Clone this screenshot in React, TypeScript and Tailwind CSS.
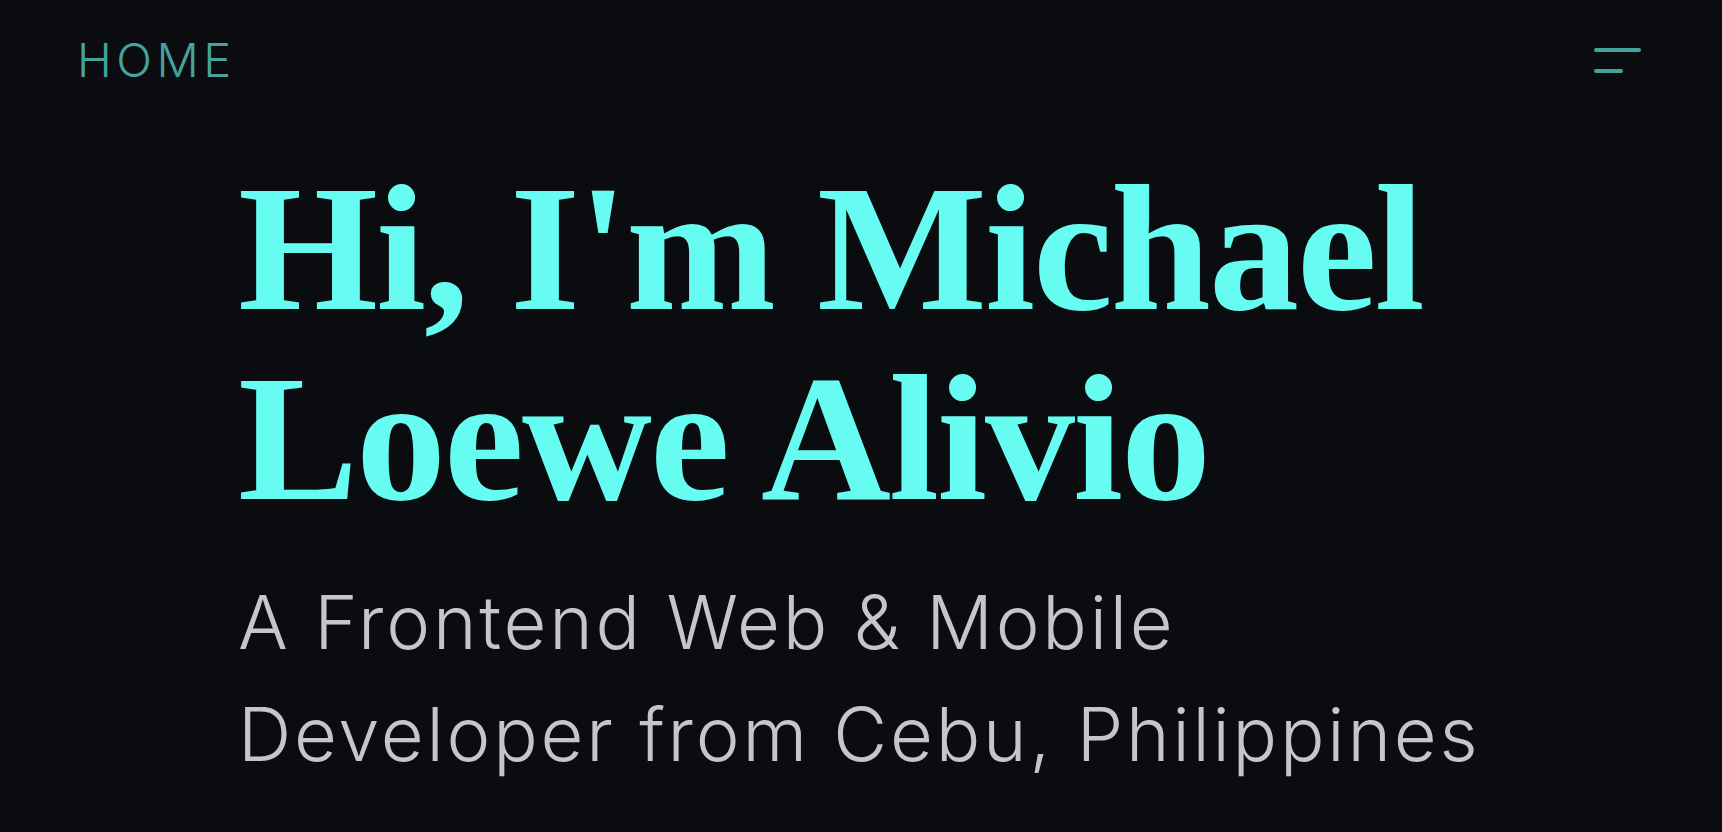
export default function App() {
  return (
    <div className="min-h-[832px] w-full bg-[#0b0c10] flex flex-col">
      <header className="flex items-start justify-between pl-[77px] pr-[81px] pt-[36px]">
        <a
          className="text-[47px] leading-[47px] font-light text-[#45a29e] tracking-[4.5px]"
          style={{ fontFamily: 'Inter, "Noto Sans", sans-serif' }}
        >
          HOME
        </a>
        <button className="flex flex-col items-start gap-[17px] pt-[12px]">
          <span className="block h-[4px] w-[47px] rounded-full bg-[#45a29e]" />
          <span className="block h-[4px] w-[29px] rounded-full bg-[#45a29e]" />
        </button>
      </header>
      <main className="pl-[238px] pt-[71px]">
        <h1
          className="text-[180px] leading-[190px] font-bold text-[#66fcf1] tracking-[-2px] whitespace-nowrap"
          style={{ fontFamily: '"Liberation Serif", serif' }}
        >
          Hi, I'm Michael
          <br />
          Loewe Alivio
        </h1>
        <p
          className="mt-[32px] text-[74px] leading-[112px] font-light text-[#c5c6c7] tracking-[2.8px] whitespace-nowrap"
          style={{ fontFamily: 'Inter, "Noto Sans", sans-serif' }}
        >
          A Frontend Web &amp; Mobile
          <br />
          Developer from Cebu, Philippines
        </p>
      </main>
    </div>
  );
}
